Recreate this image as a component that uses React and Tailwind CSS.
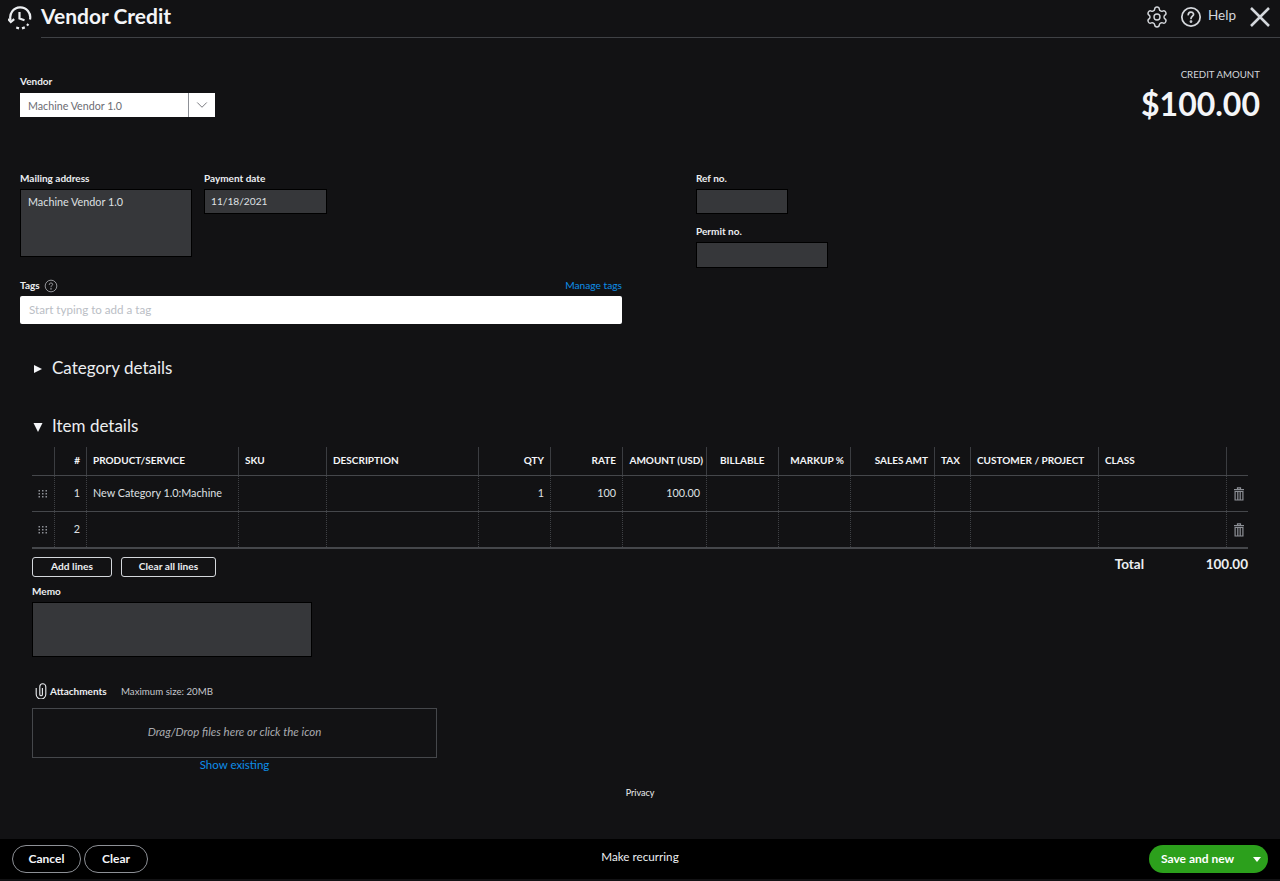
import { Settings, ChevronDown } from "lucide-react";

const columns = [
  { name: "", cls: "" },
  { name: "#", cls: "justify-end" },
  { name: "PRODUCT/SERVICE", cls: "" },
  { name: "SKU", cls: "" },
  { name: "DESCRIPTION", cls: "" },
  { name: "QTY", cls: "justify-end" },
  { name: "RATE", cls: "justify-end" },
  { name: "AMOUNT (USD)", cls: "justify-end !pr-[3px]" },
  { name: "BILLABLE", cls: "!pl-[13px]" },
  { name: "MARKUP %", cls: "justify-end" },
  { name: "SALES AMT", cls: "justify-end" },
  { name: "TAX", cls: "" },
  { name: "CUSTOMER / PROJECT", cls: "" },
  { name: "CLASS", cls: "" },
  { name: "", cls: "" },
];

const rows = [
  ["1", "New Category 1.0:Machine", "", "", "1", "100", "100.00"],
  ["2", "", "", "", "", "", ""],
];

const gridCols =
  "grid grid-cols-[22px_32px_152px_88px_152px_72px_72px_84px_72px_72px_84px_36px_128px_128px_22px]";

function Label({ children, className = "" }) {
  return (
    <div className={`text-[10px] leading-[14px] font-bold text-[#eceef1] ${className}`}>
      {children}
    </div>
  );
}

function HelpIcon({ size, stroke }) {
  return (
    <svg width={size} height={size} viewBox="0 0 24 24" fill="none" stroke="currentColor" strokeWidth={stroke}>
      <circle cx="12" cy="12" r="10" />
      <path d="M9 9.5a3 3 0 0 1 5.8-.8c.6 1.9-2.8 2.6-2.8 4.8" strokeLinecap="round" />
      <circle cx="12" cy="17" r="0.6" fill="currentColor" />
    </svg>
  );
}

function DragDots() {
  return (
    <svg width="10" height="8" viewBox="0 0 10 8" fill="#8d9096">
      {[0, 3.5, 7].map((x) =>
        [0, 3, 6].map((y) => <rect key={`${x}-${y}`} x={x + 0.5} y={y} width="1.5" height="1.5" />)
      )}
    </svg>
  );
}

function Trash() {
  return (
    <svg width="10" height="14" viewBox="0 0 10 14" fill="none" stroke="#8d9096" strokeWidth="1.2" className="ml-[2px]">
      <path d="M0 2.6h10M3.5 2.4V.8h3v1.6" />
      <path d="M1.1 4.5h7.8V13H1.1zM3.8 5v8M6.2 5v8" />
    </svg>
  );
}

function HistoryLogo() {
  return (
    <svg width="24" height="24" viewBox="0 0 24 24" fill="none" stroke="#eceef1" strokeWidth="2.2">
      <path d="M2.6 14A10 10 0 1 1 22 13.5" />
      <path d="M0 13l2.8 3 3.4-2.8" />
      <path d="M8.2 21.5l2.8.9M14 22.4l2.8-1M19 19.6l1.4-1.6" />
      <path d="M11.5 6v6.5l5 1.8" />
    </svg>
  );
}

function PaperClip() {
  return (
    <svg width="12" height="16" viewBox="0 0 12 16" fill="none" stroke="#eceef1" strokeWidth="1.1">
      <path d="M1.2 5v6.3a4.8 4.8 0 0 0 9.6 0V3.8a3 3 0 0 0-6 0v7.7a1.3 1.3 0 0 0 2.6 0V5" />
    </svg>
  );
}

function ItemTable() {
  return (
    <div className="mt-[9px] ml-[32px] w-[1216px]">
      <div className={`${gridCols} h-[29px] border-b border-[#45474b]`}>
        {columns.map((c, i) => (
          <div
            key={i}
            className={`flex items-center pl-[6px] pr-[6px] pb-[2px] text-[10px] font-bold text-[#f4f5f8] whitespace-nowrap ${c.cls} ${
              i > 0 ? "border-l border-[#3b3d41]" : ""
            }`}
          >
            {c.name}
          </div>
        ))}
      </div>
      {rows.map((r, ri) => (
        <div
          key={ri}
          className={`${gridCols} ${ri === 0 ? "h-[36px] border-b border-[#45474b]" : "h-[37px] border-b-2 border-[#45474b]"}`}
        >
          {columns.map((c, i) => {
            let content = null;
            if (i === 0) content = <DragDots />;
            else if (i === 14) content = <Trash />;
            else if (i <= 7) content = r[i - 1];
            return (
              <div
                key={i}
                className={`flex items-center text-[10.8px] text-[#dfe0e3] whitespace-nowrap ${
                  i === 0 || i === 14 ? "justify-center" : "px-[6px]"
                } ${i === 1 || (i >= 5 && i <= 7) ? "justify-end" : ""} ${
                  i > 0 ? "border-l border-dotted border-[#3f4145]" : ""
                }`}
              >
                {content}
              </div>
            );
          })}
        </div>
      ))}
    </div>
  );
}

export default function App() {
  return (
    <div className="h-[881px] w-[1280px] overflow-hidden bg-[#121214] font-['Lato',sans-serif] text-[#eceef1] flex flex-col">
      <header className="h-[38px] flex items-center shrink-0">
        <div className="w-[41px] pl-[8px] pb-[3px] shrink-0">
          <HistoryLogo />
        </div>
        <div className="flex-1 h-full flex items-center justify-between border-b border-[#3f4145] pb-[4px]">
          <h1 className="text-[21px] font-bold text-[#f4f5f8] pb-[2px]">Vendor Credit</h1>
          <div className="flex items-center text-[#d4d7dc] pr-[10px]">
            <Settings size={24} strokeWidth={1.4} />
            <span className="ml-[11px] flex">
              <HelpIcon size={22} stroke={1.9} />
            </span>
            <span className="ml-[6px] w-[27px] text-[13.5px] pb-[3px] whitespace-nowrap">Help</span>
            <svg width="20" height="20" viewBox="0 0 20 20" fill="none" stroke="currentColor" strokeWidth="2.5" className="ml-[15px]">
              <path d="M1 1l18 18M19 1L1 19" />
            </svg>
          </div>
        </div>
      </header>

      <section className="flex justify-between pl-[20px] pr-[20px] mt-[32px] h-[101px] shrink-0">
        <div className="pt-[4px]">
          <Label>Vendor</Label>
          <div className="mt-[5px] w-[195px] h-[24px] bg-white flex items-center text-[10.7px] text-[#6b6c72]">
            <div className="flex-1 pl-[8px] pt-[2px] whitespace-nowrap">Machine Vendor 1.0</div>
            <div className="w-[27px] h-full border-l border-[#8d9096] flex items-center justify-center">
              <ChevronDown size={18} strokeWidth={1.2} className="text-[#6b6c72]" />
            </div>
          </div>
        </div>
        <div className="text-right">
          <div className="text-[9.7px] leading-[14px] mt-[-3px] text-[#d4d7dc]">CREDIT AMOUNT</div>
          <div className="text-[32px] leading-[40px] font-bold text-[#f4f5f8] mt-[3px]">$100.00</div>
        </div>
      </section>

      <section className="flex pl-[20px] h-[94px] shrink-0">
        <div className="w-[184px] shrink-0">
          <Label>Mailing address</Label>
          <div className="mt-[4px] w-[172px] h-[68px] bg-[#36373a] border border-black px-[7px] pt-[4px] text-[10.8px] text-[#dfe0e3]">
            Machine Vendor 1.0
          </div>
        </div>
        <div className="w-[492px] shrink-0">
          <Label>Payment date</Label>
          <div className="mt-[4px] w-[123px] h-[25px] bg-[#36373a] border border-black px-[6px] flex items-center text-[10.2px] text-[#dfe0e3]">
            11/18/2021
          </div>
        </div>
        <div>
          <Label>Ref no.</Label>
          <div className="mt-[4px] w-[92px] h-[25px] bg-[#36373a] border border-black" />
          <Label className="mt-[10px]">Permit no.</Label>
          <div className="mt-[4px] w-[132px] h-[26px] bg-[#36373a] border border-black" />
        </div>
      </section>

      <section className="ml-[20px] w-[602px] mt-[12px] shrink-0">
        <div className="flex items-center justify-between h-[17px]">
          <div className="flex items-center gap-[4px]">
            <span className="text-[10px] font-bold text-[#eceef1]">Tags</span>
            <span className="flex text-[#b0b2b7]">
              <HelpIcon size={14} stroke={1.4} />
            </span>
          </div>
          <span className="text-[10.2px] text-[#0d8ee8]">Manage tags</span>
        </div>
        <div className="mt-[2px] h-[28px] bg-white rounded-[2px] flex items-center pl-[9px] text-[11.6px] text-[#babec5]">
          Start typing to add a tag
        </div>
      </section>

      <div className="ml-[33px] mt-[32px] h-[24px] flex items-center shrink-0">
        <svg width="10" height="10" viewBox="0 0 10 10" className="mr-[9px] mt-[1px]" fill="#f4f5f8">
          <path d="M1 1l8 4-8 4z" />
        </svg>
        <span className="text-[17px] text-[#eceef1]">Category details</span>
      </div>

      <div className="ml-[33px] mt-[34px] h-[24px] flex items-center shrink-0">
        <svg width="10" height="10" viewBox="0 0 10 10" className="mr-[9px] mt-[2px]" fill="#f4f5f8">
          <path d="M0.5 1h9l-4.5 9z" />
        </svg>
        <span className="text-[17px] text-[#eceef1]">Item details</span>
      </div>

      <ItemTable />

      <div className="ml-[32px] w-[1216px] mt-[8px] flex items-center justify-between h-[20px] shrink-0">
        <div className="flex gap-[9px]">
          <button className="w-[80px] h-[20px] rounded-[3px] border border-[#d4d7dc] text-[10.2px] font-bold text-[#eceef1]">
            Add lines
          </button>
          <button className="w-[95px] h-[20px] rounded-[3px] border border-[#d4d7dc] text-[10.2px] font-bold text-[#eceef1]">
            Clear all lines
          </button>
        </div>
        <div className="flex items-center text-[13.5px] font-bold text-[#eceef1] pb-[5px]">
          <span>Total</span>
          <span className="w-[104px] text-right">100.00</span>
        </div>
      </div>

      <div className="ml-[32px] mt-[7px] shrink-0">
        <Label>Memo</Label>
        <div className="mt-[4px] w-[280px] h-[55px] bg-[#36373a] border border-black" />
      </div>

      <div className="ml-[35px] mt-[24px] h-[20px] flex items-center shrink-0">
        <span className="flex mr-[3px]">
          <PaperClip />
        </span>
        <span className="text-[10px] font-bold text-[#eceef1] w-[71px] pt-[1px]">Attachments</span>
        <span className="text-[9.7px] text-[#c5c7cc]">Maximum size: 20MB</span>
      </div>

      <div className="ml-[32px] mt-[7px] w-[405px] h-[50px] border border-[#45474b] flex items-center justify-center pb-[3px] text-[11.5px] italic text-[#a9abb0] shrink-0">
        Drag/Drop files here or click the icon
      </div>
      <div className="ml-[32px] w-[405px] text-center text-[11.5px] leading-[14px] text-[#0d8ee8] shrink-0">
        Show existing
      </div>

      <div className="text-center text-[9px] leading-[12px] mt-[15px] text-[#eceef1] shrink-0">Privacy</div>

      <footer className="mt-[40px] h-[40px] bg-black grid grid-cols-[1fr_auto_1fr] items-center pl-[12px] pr-[12px] shrink-0">
        <div className="flex gap-[3px]">
          <button className="w-[69px] h-[28px] rounded-full border border-[#8d9096] text-[12px] font-bold text-[#f4f5f8]">
            Cancel
          </button>
          <button className="w-[64px] h-[28px] rounded-full border border-[#8d9096] text-[12px] font-bold text-[#f4f5f8]">
            Clear
          </button>
        </div>
        <span className="text-[11.7px] text-[#eceef1] pb-[4px]">Make recurring</span>
        <div className="flex justify-end">
          <button className="w-[119px] h-[28px] rounded-full bg-[#2ca01c] flex items-center justify-between pl-[12px] pr-[7px] text-[12px] font-bold text-white">
            Save and new
            <svg width="8" height="5" viewBox="0 0 8 5" fill="#ffffff">
              <path d="M0 0h8L4 5z" />
            </svg>
          </button>
        </div>
      </footer>
    </div>
  );
}
